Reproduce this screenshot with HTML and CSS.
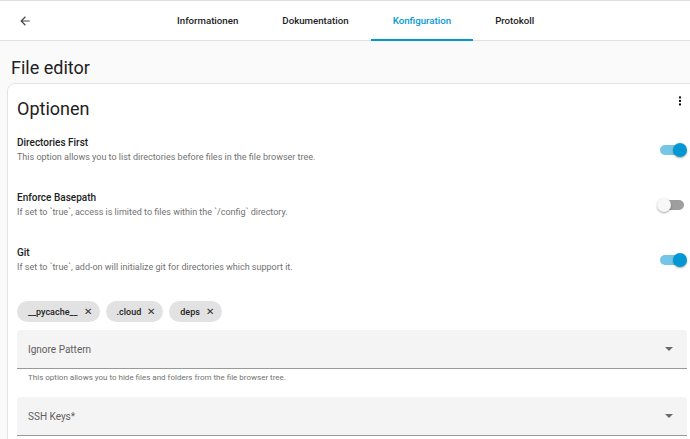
FILE: index.html
```html
<!DOCTYPE html>
<html lang="de">
<head>
    <meta charset="UTF-8">
    <meta name="viewport" content="width=device-width, initial-scale=1.0">
    <title>File editor - Konfiguration</title>
    <link rel="stylesheet" href="styles.css">
</head>
<body>
    <header class="topbar">
        <button class="back" aria-label="Zurück">
            <svg width="14" height="14" viewBox="0 0 24 24"><path d="M20 11H7.83l5.59-5.59L12 4l-8 8 8 8 1.41-1.41L7.83 13H20v-2z" fill="#444"/></svg>
        </button>
        <nav class="tabs">
            <a href="#" class="tab">Informationen</a>
            <a href="#" class="tab">Dokumentation</a>
            <a href="#" class="tab active">Konfiguration</a>
            <a href="#" class="tab">Protokoll</a>
        </nav>
    </header>

    <main class="content">
        <h1 class="page-title">File editor</h1>

        <section class="card">
            <div class="card-head">
                <h2>Optionen</h2>
                <span class="menu">
                    <svg width="14" height="14" viewBox="0 0 24 24"><path d="M12 8a2 2 0 1 0 0-4 2 2 0 0 0 0 4zm0 2a2 2 0 1 0 0 4 2 2 0 0 0 0-4zm0 6a2 2 0 1 0 0 4 2 2 0 0 0 0-4z" fill="#111"/></svg>
                </span>
            </div>

            <div class="options">
                <div class="option">
                    <div class="option-text">
                        <div class="option-title">Directories First</div>
                        <div class="option-desc">This option allows you to list directories before files in the file browser tree.</div>
                    </div>
                    <span class="switch on"><span class="thumb"></span></span>
                </div>

                <div class="option">
                    <div class="option-text">
                        <div class="option-title">Enforce Basepath</div>
                        <div class="option-desc">If set to `true`, access is limited to files within the `/config` directory.</div>
                    </div>
                    <span class="switch"><span class="thumb"></span></span>
                </div>

                <div class="option">
                    <div class="option-text">
                        <div class="option-title">Git</div>
                        <div class="option-desc">If set to `true`, add-on will initialize git for directories which support it.</div>
                    </div>
                    <span class="switch on"><span class="thumb"></span></span>
                </div>
            </div>

            <div class="chips">
                <span class="chip">__pycache__ <span class="x">✕</span></span>
                <span class="chip">.cloud <span class="x">✕</span></span>
                <span class="chip">deps <span class="x">✕</span></span>
            </div>

            <div class="select">
                <span class="select-label">Ignore Pattern</span>
                <span class="caret"></span>
            </div>
            <div class="helper">This option allows you to hide files and folders from the file browser tree.</div>

            <div class="select">
                <span class="select-label">SSH Keys*</span>
                <span class="caret"></span>
            </div>
        </section>
    </main>
</body>
</html>
```

FILE: styles.css
```css
:root {
    --primary: #0398d4;
    --primary-light: #75c6e6;
    --text: #212121;
    --muted: #727272;
}

html, body {
    overflow: hidden;
}

body {
    font-family: Roboto, 'Noto Sans', sans-serif;
    margin: 0;
    padding: 0;
    background-color: #fafafa;
    color: var(--text);
}

.topbar {
    height: 39px;
    background: white;
    border-top: 1px solid #dedede;
    border-bottom: 1px solid #e2e2e2;
    display: flex;
    align-items: stretch;
}

.back {
    background: none;
    border: none;
    padding: 0;
    width: 50px;
    display: flex;
    align-items: center;
    justify-content: center;
    cursor: pointer;
}

.tabs {
    display: flex;
    margin-left: 105px;
}

.tab {
    display: flex;
    align-items: center;
    padding: 0 22px;
    font-size: 9.7px;
    font-weight: 500;
    color: #1c1c1c;
    text-decoration: none;
    border-bottom: 2px solid transparent;
    margin-bottom: -1px;
}

.tab.active {
    color: var(--primary);
    border-bottom-color: var(--primary);
}

.content {
    padding: 0 0 0 7px;
}

.page-title {
    margin: 0;
    padding: 16px 0 0 4px;
    height: 26px;
    font-size: 18px;
    font-weight: 400;
}

.card {
    background: white;
    border: 1px solid #e3e3e3;
    border-radius: 8px;
    margin-right: -8px;
    padding: 0 10px 20px 9px;
}

.card-head {
    display: flex;
    justify-content: space-between;
    align-items: flex-start;
    padding-top: 14px;
}

.card-head h2 {
    margin: 0;
    font-size: 18px;
    font-weight: 400;
}

.menu {
    display: flex;
    margin-top: -4px;
    margin-right: 0;
}

.options {
    margin-top: 3px;
}

.option {
    display: flex;
    align-items: center;
    justify-content: space-between;
    height: 55px;
}

.option-title {
    font-size: 10px;
    font-weight: 500;
    margin-bottom: 4px;
}

.option-desc {
    font-size: 9px;
    color: var(--muted);
}

.switch {
    position: relative;
    width: 24px;
    height: 10px;
    border-radius: 5px;
    background: #9e9e9e;
    margin-right: 3px;
    margin-top: 1px;
}

.switch .thumb {
    position: absolute;
    top: -2px;
    left: -3px;
    width: 14px;
    height: 14px;
    border-radius: 50%;
    background: #f7f7f7;
    box-shadow: 0 1px 2px rgba(0, 0, 0, 0.35);
}

.switch.on {
    background: var(--primary-light);
}

.switch.on .thumb {
    left: auto;
    right: -3px;
    background: var(--primary);
}

.chips {
    display: flex;
    gap: 6px;
    margin-top: 14px;
}

.chip {
    display: flex;
    align-items: center;
    gap: 6px;
    height: 21px;
    padding: 0 8px 0 11px;
    background: #e2e2e2;
    border-radius: 11px;
    font-size: 9px;
    font-weight: 500;
}

.chip .x {
    font-size: 10px;
    font-weight: 400;
    color: #333;
}

.select {
    display: flex;
    align-items: center;
    justify-content: space-between;
    height: 38px;
    margin-top: 8px;
    padding: 0 14px 0 11px;
    background: #f4f4f4;
    border-radius: 4px 4px 0 0;
    border-bottom: 1px solid #9a9a9a;
}

.select-label {
    font-size: 10px;
    color: #5f5f5f;
}

.caret {
    width: 0;
    height: 0;
    border-left: 4px solid transparent;
    border-right: 4px solid transparent;
    border-top: 4px solid #6a6a6a;
}

.helper {
    font-size: 8px;
    color: var(--muted);
    padding: 4px 0 0 11px;
    height: 17px;
}

.helper + .select {
    margin-top: 7px;
}
```
